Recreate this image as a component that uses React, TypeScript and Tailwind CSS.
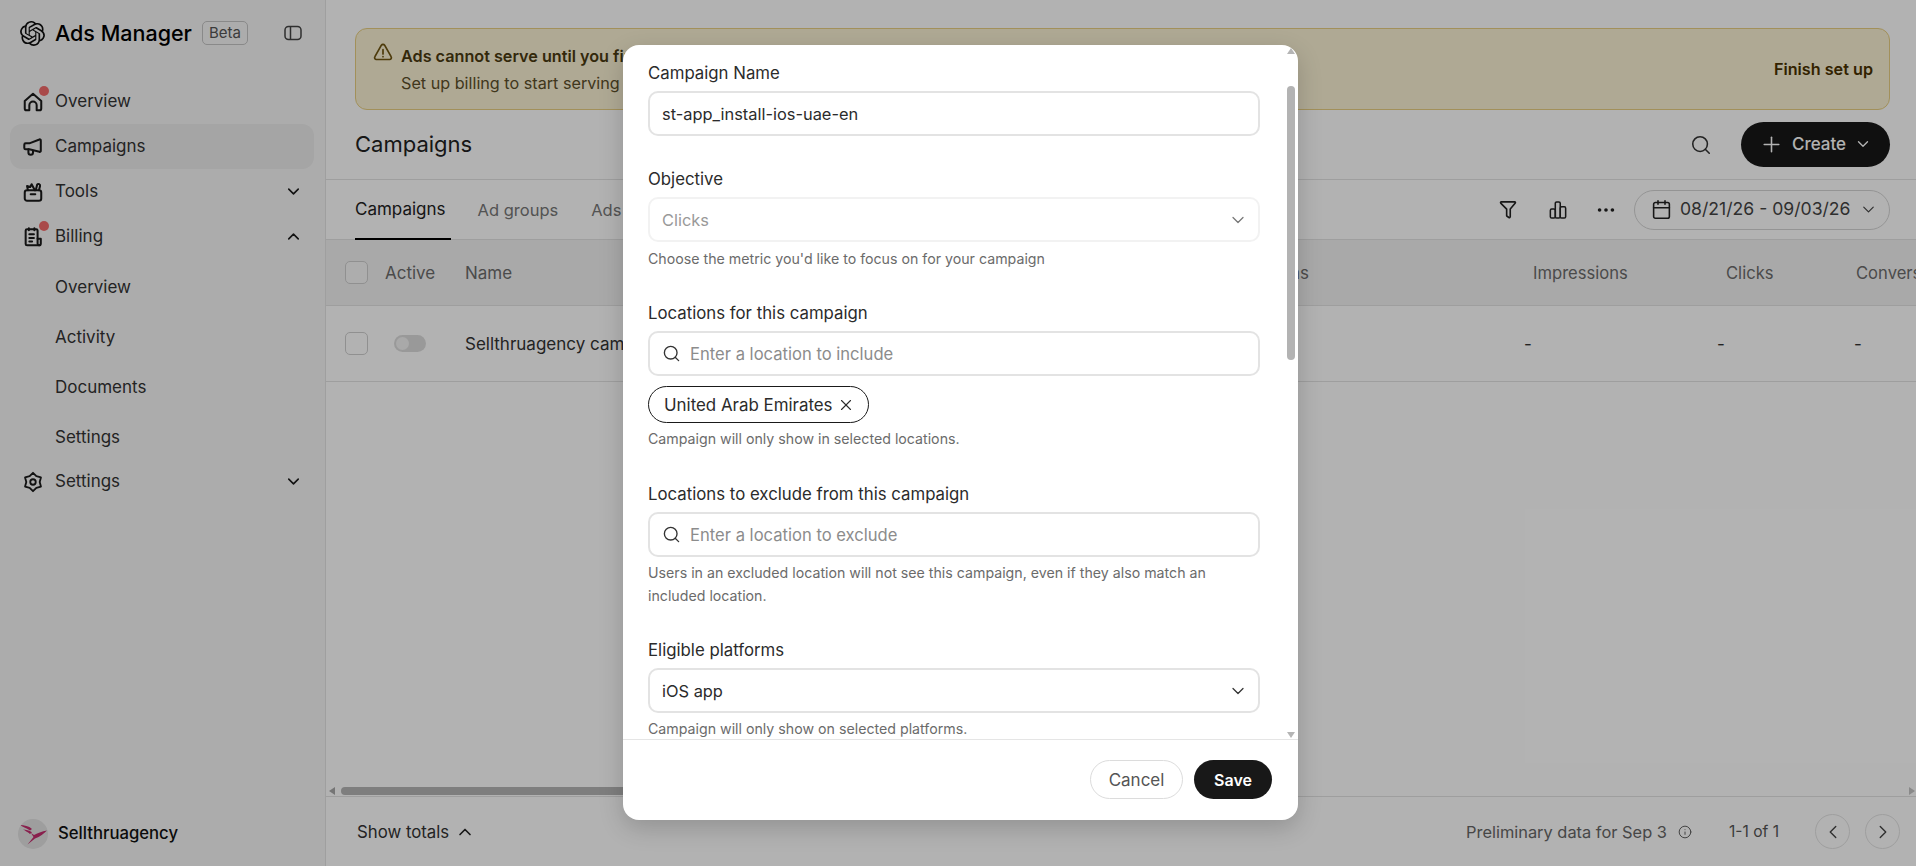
import { ChevronDown, ChevronUp, ChevronLeft, ChevronRight, Search, Plus, X, Info, Calendar, Ellipsis } from "lucide-react";
import { SiOpenai } from "react-icons/si";

const HomeIcon = () => (
  <svg viewBox="0 0 24 24" className="w-[22px] h-[22px]" fill="none" stroke="currentColor" strokeWidth={2.2} strokeLinejoin="round" strokeLinecap="round">
    <path d="M3 10.8 12 3l9 7.8V19a2 2 0 0 1-2 2h-3v-5.500a4 4 0 0 0-8 0V21H5a2 2 0 0 1-2-2z" />
  </svg>
);

const MegaphoneIcon = () => (
  <svg viewBox="0 0 24 24" className="w-[22px] h-[22px]" fill="none" stroke="currentColor" strokeWidth={2.2} strokeLinejoin="round" strokeLinecap="round">
    <path d="M2.500 9.500A1.500 1.500 0 0 1 4 8h4l11-4.200a1 1 0 0 1 1.500 1v11.400a1 1 0 0 1-1.500 1L8 14.500H4A1.500 1.500 0 0 1 2.500 13z" />
    <path d="M7 14.500V18a2.500 2.500 0 0 0 5 0v-2" />
  </svg>
);

const ToolsIcon = () => (
  <svg viewBox="0 0 24 24" className="w-[22px] h-[22px]" fill="none" stroke="currentColor" strokeWidth={2.2} strokeLinejoin="round" strokeLinecap="round">
    <rect x="3" y="10" width="18" height="11.500" rx="2.500" />
    <path d="M9.500 14.500h5" />
    <path d="M6.500 10 5.500 5.500 9 6.500l1.500-3L14 10" />
    <path d="M15 10l1.500-6a1.800 1.800 0 0 1 3.200 1.500L18.500 10" />
  </svg>
);

const BillingIcon = () => (
  <svg viewBox="0 0 24 24" className="w-[22px] h-[22px]" fill="none" stroke="currentColor" strokeWidth={2.2} strokeLinejoin="round" strokeLinecap="round">
    <path d="M17 14V5a1.500 1.500 0 0 0-1.500-1.500h-10A1.500 1.500 0 0 0 4 5v14.500A1.500 1.500 0 0 0 5.500 21H19" />
    <path d="M17 14h3.500v5a2 2 0 0 1-2 2 2 2 0 0 1-1.500-2z" />
    <path d="M7.500 2.500v2M13.500 2.500v2M8 9h5M8 13h5M8 17h3" />
  </svg>
);

const GearIcon = () => (
  <svg viewBox="0 0 24 24" className="w-[22px] h-[22px]" fill="none" stroke="currentColor" strokeWidth={2} strokeLinejoin="round" strokeLinecap="round">
    <path d="M12 2 15.650 5.680 20.660 7 19.300 12l1.360 5-5.010 1.320L12 22l-3.650-3.680L3.340 17 4.700 12 3.340 7l5.010-1.320z" />
    <circle cx="12" cy="12" r="3" />
  </svg>
);

const PanelIcon = () => (
  <svg viewBox="0 0 18 16" className="w-[18px] h-[16px]" fill="none" stroke="currentColor" strokeWidth={1.5}>
    <rect x="1" y="1.500" width="16" height="13" rx="3.500" />
    <path d="M6.500 1.500v13" />
  </svg>
);

const WarningIcon = () => (
  <svg viewBox="0 0 20 18" className="w-[20px] h-[18px]" fill="none" stroke="currentColor" strokeWidth={1.7} strokeLinejoin="round" strokeLinecap="round">
    <path d="M8.400 2.200a1.900 1.900 0 0 1 3.200 0l6.500 11.500a1.800 1.800 0 0 1-1.600 2.800H3.500a1.800 1.800 0 0 1-1.600-2.800z" />
    <path d="M10 6.500V11M10 13.600v.1" />
  </svg>
);

const FilterIcon = () => (
  <svg viewBox="0 0 20 22" className="w-[18px] h-[20px]" fill="none" stroke="currentColor" strokeWidth={1.8} strokeLinejoin="round" strokeLinecap="round">
    <path d="M2.500 2h15a.8.8 0 0 1 .6 1.300L12.500 10v8.500a1 1 0 0 1-1.500.8l-2-1.300a1 1 0 0 1-.5-.8V10L1.900 3.300A.8.8 0 0 1 2.500 2z" />
  </svg>
);

const BarsIcon = () => (
  <svg viewBox="0 0 20 22" className="w-[18px] h-[20px]" fill="none" stroke="currentColor" strokeWidth={1.7} strokeLinejoin="round">
    <rect x="1.500" y="10" width="5.500" height="10" rx="1.500" />
    <rect x="7" y="2" width="5.500" height="18" rx="1.500" />
    <rect x="12.500" y="7.500" width="6" height="12.500" rx="1.500" />
  </svg>
);

const BirdLogo = () => (
  <svg viewBox="0 0 30 30" className="w-[30px] h-[30px]" fill="#c42e6f">
    <path d="M2 6c4 0 9 1 12 4l-2 1.500C9 9.500 5 8 2 6z" />
    <path d="M5 10.500c3 0 6 .8 9 2.800L12 15c-2.500-2-5-3.500-7-4.500z" />
    <path d="M29 11.500c-5 .5-10 3-13 4.500l-3-2 2.500 4-6 7.500 7.500-6c5-1.500 9-5 12-8z" />
  </svg>
);

const NavItem = ({ icon, label, active, dot, chevron }: { icon: any; label: string; active?: boolean; dot?: boolean; chevron?: "up" | "down" }) => (
  <div className={`h-[45px] flex items-center rounded-xl pl-[12px] pr-[11px] gap-[11px] text-[#333] ${active ? "bg-[#ececec]" : ""}`}>
    <div className="relative w-[22px] h-[22px] flex items-center justify-center text-[#1a1a1a]">
      {icon}
      {dot && <span className="absolute -top-[5px] -right-[5px] w-[10px] h-[10px] rounded-full bg-[#f26b6b]" />}
    </div>
    <span className="text-[17px] flex-1">{label}</span>
    {chevron === "down" && <ChevronDown size={19} strokeWidth={2} className="text-[#1a1a1a]" />}
    {chevron === "up" && <ChevronUp size={19} strokeWidth={2} className="text-[#1a1a1a]" />}
  </div>
);

const SubItem = ({ label }: { label: string }) => (
  <div className="h-[46px] flex items-center pl-[45px] text-[17px] text-[#333]">{label}</div>
);

const Field = ({ label, helper, children, className }: { label: string; helper?: string; children: any; className?: string }) => (
  <div className={className}>
    <div className="h-6 mb-[6px] pt-[2px] flex items-center text-[16.8px] text-[#2b2b2b]">{label}</div>
    {children}
    {helper && <div className="mt-[4px] text-[14.2px] leading-[23px] text-[#6b6b6b]">{helper}</div>}
  </div>
);

const SearchInput = ({ placeholder }: { placeholder: string }) => (
  <div className="h-[45px] flex items-center pl-[12px] gap-[9px] rounded-[10px] border-2 border-[#e3e3e3]">
    <Search size={19} strokeWidth={1.7} className="text-[#333]" />
    <input placeholder={placeholder} className="flex-1 pt-[2px] outline-none text-[16.6px] placeholder:text-[#8c8c8c]" />
  </div>
);

const Modal = () => (
  <div className="w-[675px] h-[775px] ml-[5px] bg-white rounded-2xl shadow-[0_8px_24px_rgba(0,0,0,0.18)] flex flex-col overflow-hidden relative">
    <div className="flex-1 overflow-hidden pl-[25px] pr-[38px] pt-[16px]">
      <Field label="Campaign Name">
        <input defaultValue="st-app_install-ios-uae-en" className="w-full h-[45px] px-[12px] pt-[1px] rounded-[10px] border-2 border-[#e3e3e3] text-[16.4px] text-[#2b2b2b] outline-none" />
      </Field>
      <Field label="Objective" className="mt-[31px]">
        <div className="h-[45px] flex items-center justify-between pl-[12px] pr-[10px] rounded-[10px] border-2 border-[#f2f2f2] text-[16.4px] text-[#999]">
          <span className="pt-[2px]">Clicks</span>
          <ChevronDown size={20} strokeWidth={1.5} className="text-[#777]" />
        </div>
        <div className="mt-[5px] text-[14.2px] leading-[23px] text-[#6b6b6b]">Choose the metric you'd like to focus on for your campaign</div>
      </Field>
      <Field label="Locations for this campaign" className="mt-[31px]">
        <SearchInput placeholder="Enter a location to include" />
        <div className="mt-[10px] w-[221px] h-[37px] flex items-center pl-[15px] gap-[3px] rounded-full border border-[#1a1a1a] text-[16.9px] text-[#2b2b2b]">
          <span className="pt-[2px]">United Arab Emirates</span>
          <X size={18} strokeWidth={1.5} className="ml-[1px]" />
        </div>
        <div className="mt-[4px] text-[14.2px] leading-[23px] text-[#6b6b6b]">Campaign will only show in selected locations.</div>
      </Field>
      <Field label="Locations to exclude from this campaign" helper="Users in an excluded location will not see this campaign, even if they also match an included location." className="mt-[32px]">
        <SearchInput placeholder="Enter a location to exclude" />
      </Field>
      <Field label="Eligible platforms" helper="Campaign will only show on selected platforms." className="mt-[31px]">
        <div className="h-[45px] flex items-center justify-between pl-[12px] pr-[10px] rounded-[10px] border-2 border-[#e3e3e3] text-[16.4px] text-[#2b2b2b]">
          <span className="pt-[2px]">iOS app</span>
          <ChevronDown size={20} strokeWidth={1.5} className="text-[#333]" />
        </div>
      </Field>
    </div>
    {/* scrollbar */}
    <div className="absolute top-[3px] right-[3px] w-[8px] h-[690px] flex flex-col items-center">
      <div className="w-0 h-0 border-x-[4px] border-x-transparent border-b-[6px] border-b-[#b5b5b5]" />
      <div className="w-[8px] h-[274px] mt-[32px] bg-[#b3b3b3] rounded-full" />
      <div className="mt-auto w-0 h-0 border-x-[4px] border-x-transparent border-t-[6px] border-t-[#b5b5b5]" />
    </div>
    <div className="h-[81px] border-t border-[#e5e5e5] flex items-start justify-end gap-[11px] pt-[20px] pr-[26px]">
      <button className="w-[93px] h-[39px] pt-[2px] rounded-full border border-[#dcdcdc] text-[17px] text-[#555]">Cancel</button>
      <button className="w-[78px] h-[39px] rounded-full bg-[#181818] text-white text-[16px] font-semibold">Save</button>
    </div>
  </div>
);

export default function App() {
  return (
    <div className="relative w-full h-screen overflow-hidden flex bg-white font-['Inter',sans-serif] text-[#222]">
      <aside className="w-[326px] h-full shrink-0 border-r border-[#e4e4e4] bg-[#f7f7f7] flex flex-col">
        <div className="h-[66px] pt-[21px] pl-[20px] pr-[23px] flex items-start">
          <SiOpenai size={25} className="text-[#111]" />
          <span className="ml-[10px] text-[21.5px] leading-[25px] font-medium text-black">Ads Manager</span>
          <span className="ml-[10px] h-[24px] w-[46px] flex items-center justify-center rounded-[5px] border border-[#c4c4c4] text-[15px] text-[#555]">Beta</span>
          <span className="ml-auto mt-[4px] text-[#444]"><PanelIcon /></span>
        </div>
        <nav className="mt-[13px] pl-[10px] pr-[11px] flex flex-col">
          <NavItem icon={<HomeIcon />} label="Overview" dot />
          <NavItem icon={<MegaphoneIcon />} label="Campaigns" active />
          <NavItem icon={<ToolsIcon />} label="Tools" chevron="down" />
          <NavItem icon={<BillingIcon />} label="Billing" dot chevron="up" />
          <div className="mt-[6px] -mb-[2px] flex flex-col gap-1">
            <SubItem label="Overview" />
            <SubItem label="Activity" />
            <SubItem label="Documents" />
            <SubItem label="Settings" />
          </div>
          <NavItem icon={<GearIcon />} label="Settings" chevron="down" />
        </nav>
        <div className="mt-auto mb-[17px] pl-[18px] flex items-center gap-[10px]">
          <div className="w-[30px] h-[30px] rounded-full bg-[#e2e2e2] overflow-hidden"><BirdLogo /></div>
          <span className="text-[16.7px] font-medium text-[#111]">Sellthruagency</span>
        </div>
      </aside>

      <main className="flex-1 min-w-0 flex flex-col">
        <div className="mt-[28px] ml-[29px] mr-[26px] h-[82px] shrink-0 rounded-xl border border-[#e8cf82] bg-[#fbf2d4] flex items-center justify-between pl-[17px] pr-[16px]">
          <div className="flex gap-[8px]">
            <span className="mt-[1px] text-[#6f5510]"><WarningIcon /></span>
            <div className="text-[16.2px] leading-[27px] pt-[1px]">
              <div className="font-semibold text-[#4a3a10]">Ads cannot serve until you finish setting up your account</div>
              <div className="text-[#5c4f2a]">Set up billing to start serving your campaigns</div>
            </div>
          </div>
          <span className="text-[16.2px] font-semibold text-[#4a3200]">Finish set up</span>
        </div>

        <div className="h-[70px] shrink-0 border-b border-[#e2e2e2] pl-[29px] pr-[26px] flex items-center justify-between">
          <span className="text-[22px] text-[#222]">Campaigns</span>
          <div className="flex items-center gap-[29px]">
            <Search size={22} strokeWidth={1.7} className="text-[#333]" />
            <button className="w-[149px] h-[45px] -mt-[1px] rounded-full bg-[#181818] text-white flex items-center justify-center gap-[8px] text-[17px] font-medium">
              <Plus size={25} strokeWidth={1.5} />
              <span className="pt-[2px]">Create</span>
              <ChevronDown size={18} strokeWidth={1.8} />
            </button>
          </div>
        </div>

        <div className="h-[60px] shrink-0 border-b border-[#e2e2e2] pl-[29px] pr-[26px] flex items-center">
          <div className="h-full pr-[5px] pt-[2px] mr-[27px] flex items-center border-b-2 -mb-[1px] border-black text-[17px] text-[#222]">Campaigns</div>
          <div className="pr-[7px] pt-[2px] mr-[26px] text-[16.5px] text-[#777]">Ad groups</div>
          <div className="pt-[2px] text-[16.5px] text-[#777]">Ads</div>
          <div className="ml-auto flex items-center text-[#222]">
            <FilterIcon />
            <span className="ml-[32px]"><BarsIcon /></span>
            <Ellipsis size={22} strokeWidth={2} className="ml-[28px]" />
            <div className="ml-[17px] w-[256px] h-[40px] rounded-full border border-[#d5d5d5] flex items-center pl-[16px] gap-[9px] text-[17.6px] text-[#444]">
              <Calendar size={21} strokeWidth={1.8} className="text-[#222]" />
              <span className="-ml-[1px]">08/21/26 - 09/03/26</span>
              <ChevronDown size={19} strokeWidth={1.5} />
            </div>
          </div>
        </div>

        <div className="h-[66px] shrink-0 border-b border-[#e2e2e2] bg-[#f3f3f3] flex items-center pt-[2px] text-[17px] text-[#6c6c6c] overflow-hidden">
          <span className="ml-[19px] -mt-[2px] w-[23px] h-[23px] shrink-0 rounded-[5px] border border-[#cfcfcf] bg-white/40" />
          <span className="ml-[17px] w-[80px] shrink-0">Active</span>
          <span className="w-[695px] shrink-0">Name</span>
          <span className="w-[373px] shrink-0">Recommendations</span>
          <span className="w-[193px] shrink-0 text-[16.6px]">Impressions</span>
          <span className="w-[130px] shrink-0 text-[16.6px]">Clicks</span>
          <span className="shrink-0 text-[16.6px]">Conversions</span>
        </div>

        <div className="h-[76px] shrink-0 border-b border-[#e2e2e2] flex items-center pt-[2px] text-[17px] text-[#333] overflow-hidden">
          <span className="ml-[19px] -mt-[2px] w-[23px] h-[23px] shrink-0 rounded-[5px] border border-[#cfcfcf]" />
          <span className="ml-[26px] -mt-[2px] w-[32px] h-[17px] shrink-0 rounded-full bg-[#dcdcdc] flex items-center pl-[2px]">
            <span className="w-[13px] h-[13px] rounded-full bg-[#f2f2f2]" />
          </span>
          <span className="ml-[39px] w-[1059px] shrink-0">Sellthruagency campaign</span>
          <span className="w-[193px] shrink-0">-</span>
          <span className="w-[137px] shrink-0">-</span>
          <span className="shrink-0">-</span>
        </div>

        <div className="mt-auto h-[11px] flex items-center pl-[3px] pr-[1px]">
          <span className="w-0 h-0 border-y-[4px] border-y-transparent border-r-[6px] border-r-[#a8a8a8]" />
          <span className="ml-[6px] w-[700px] h-[8px] rounded-full bg-[#b5b5b5]" />
          <span className="ml-auto w-0 h-0 border-y-[4px] border-y-transparent border-l-[6px] border-l-[#c4c4c4]" />
        </div>

        <div className="h-[70px] shrink-0 border-t border-[#e2e2e2] pl-[31px] pr-[16px] flex items-center text-[#444]">
          <span className="pt-[2px] text-[16.8px] text-[#333]">Show totals</span>
          <ChevronUp size={20} strokeWidth={2} className="ml-[6px] text-[#222]" />
          <span className="ml-auto pt-[1px] text-[16.4px] text-[#666]">Preliminary data for Sep 3</span>
          <Info size={14} strokeWidth={1.6} className="ml-[11px] text-[#555]" />
          <span className="ml-[37px] pt-[1px] text-[15.6px] text-[#555]">1-1 of 1</span>
          <span className="ml-[36px] w-[35px] h-[35px] rounded-full border border-[#e3e3e3] flex items-center justify-center"><ChevronLeft size={22} strokeWidth={1.5} /></span>
          <span className="ml-[15px] w-[35px] h-[35px] rounded-full border border-[#e3e3e3] flex items-center justify-center"><ChevronRight size={22} strokeWidth={1.5} /></span>
        </div>
      </main>

      <div className="absolute inset-0 bg-black/30 flex justify-center items-start pt-[45px]">
        <Modal />
      </div>
    </div>
  );
}
